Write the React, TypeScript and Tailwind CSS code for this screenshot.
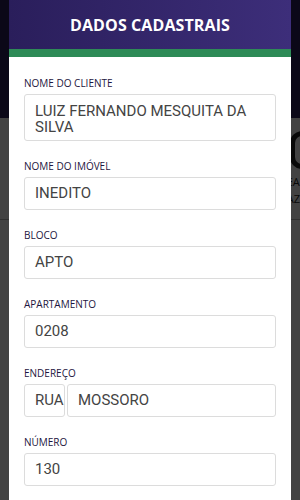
import React from 'react'

const fields: { label: string; value: string; multiline?: boolean }[] = [
  { label: 'Nome do cliente', value: 'LUIZ FERNANDO MESQUITA DA SILVA', multiline: true },
  { label: 'Nome do imóvel', value: 'INEDITO' },
  { label: 'Bloco', value: 'APTO' },
  { label: 'Apartamento', value: '0208' },
]

function Label({ children }: { children: React.ReactNode }) {
  return (
    <div className="mb-[5px] h-[12px] text-[10px] leading-[12px] font-medium uppercase text-[#1d1640] [font-family:'Open_Sans',sans-serif]">
      {children}
    </div>
  )
}

function Box({ children, className = '' }: { children: React.ReactNode; className?: string }) {
  return (
    <div
      className={
        'rounded-[3px] border border-[#dcdcdc] bg-white px-[10px] text-[15px] text-[#444] [font-family:Roboto,sans-serif] ' +
        className
      }
    >
      {children}
    </div>
  )
}

export default function App() {
  return (
    <div className="relative h-[500px] w-[300px] overflow-hidden bg-white">
      {/* page behind the dialog */}
      <div className="h-[118px] bg-[#2b1f5e]" />
      <div className="flex h-[102px] flex-col items-end justify-center border-b border-[#bbb] pr-0">
        <div className="mr-[-14px] h-[38px] w-[24px] rounded-full border-[5px] border-[#222]" />
        <div className="mt-[4px] text-[11px] leading-[17px] text-[#222] [font-family:'Open_Sans',sans-serif]">
          <div>EA</div>
          <div>AZ</div>
        </div>
      </div>

      {/* overlay */}
      <div className="absolute inset-0 bg-black/[0.74]" />

      {/* dialog */}
      <div className="absolute inset-y-0 left-[9px] w-[282px] bg-white">
        <div className="flex h-[49px] items-center justify-center bg-gradient-to-r from-[#2a1e5b] to-[#3d2e7a]">
          <h2 className="text-[16px] font-bold tracking-[0.1px] text-white [font-family:'Open_Sans',sans-serif]">
            DADOS CADASTRAIS
          </h2>
        </div>
        <div className="h-[8px] bg-[#2e8b57]" />

        <div className="px-[15px] pt-[20px]">
          {fields.map((f) => (
            <div key={f.label} className="mb-[19px]">
              <Label>{f.label}</Label>
              {f.multiline ? (
                <Box className="h-[47px] pt-[8px] leading-[16px]">{f.value}</Box>
              ) : (
                <Box className="flex h-[33px] items-center">{f.value}</Box>
              )}
            </div>
          ))}

          <div className="mb-[19px]">
            <Label>Endereço</Label>
            <div className="flex gap-[2px]">
              <Box className="flex h-[33px] w-[41px] items-center">RUA</Box>
              <Box className="flex h-[33px] flex-1 items-center">MOSSORO</Box>
            </div>
          </div>

          <div className="mb-[19px]">
            <Label>Número</Label>
            <Box className="flex h-[33px] items-center">130</Box>
          </div>
        </div>
      </div>
    </div>
  )
}
